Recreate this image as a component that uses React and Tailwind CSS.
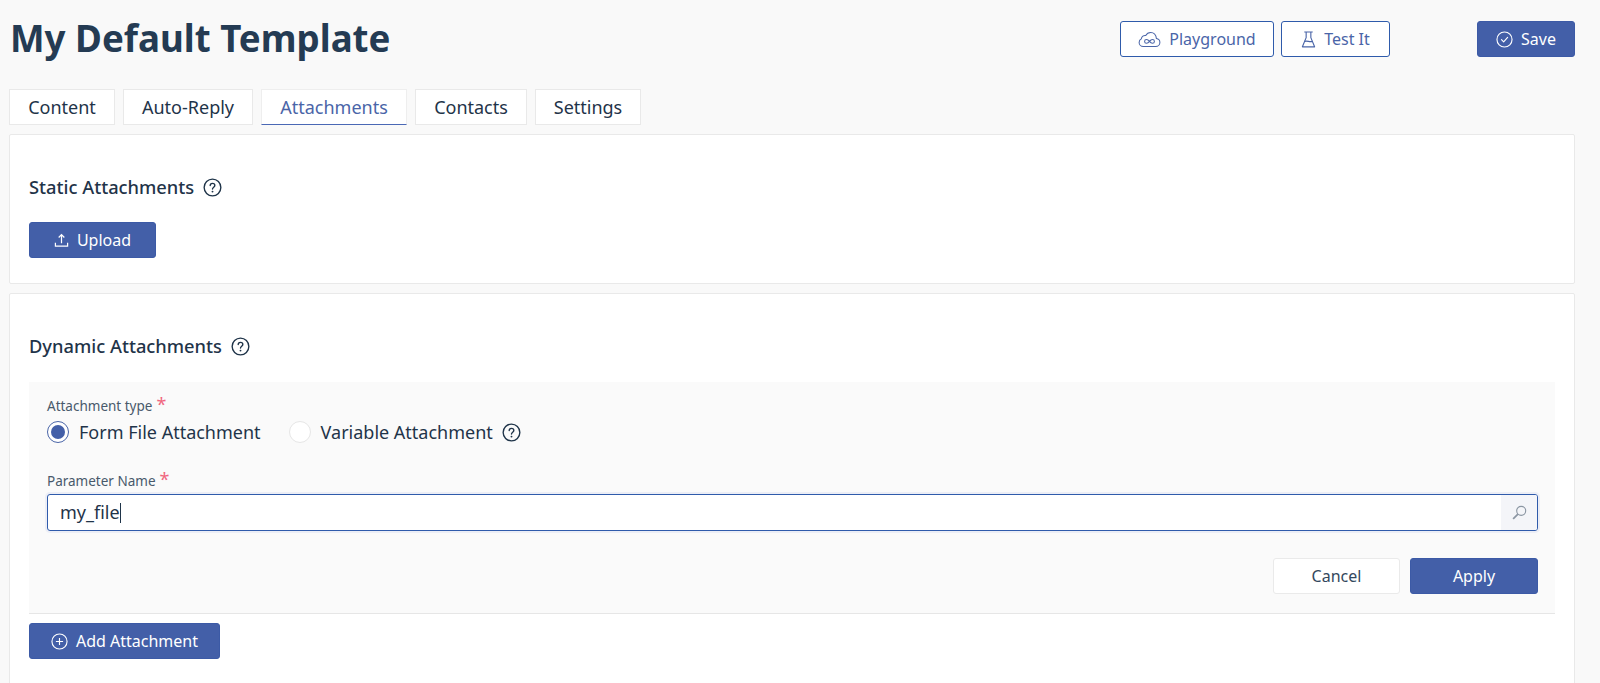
import React from 'react';

const HelpIcon = ({ className }) => (
  <svg viewBox="0 0 18 18" className={className} fill="none" stroke="currentColor">
    <circle cx="9" cy="9" r="7.9" strokeWidth="1.3" />
    <path d="M6.800 7.200c0-1.300 1-2.100 2.200-2.100s2.200.8 2.200 2c0 1.700-2.200 1.700-2.200 3.400" strokeWidth="1.300" strokeLinecap="round" />
    <circle cx="9" cy="12.900" r=".9" fill="currentColor" stroke="none" />
  </svg>
);

const CloudIcon = () => (
  <svg viewBox="0 0 24 18" className="w-[23px] h-[17px]" fill="none" stroke="currentColor" strokeWidth="1.1">
    <path d="M5.500 16.500h13c2.500 0 4.500-1.900 4.500-4.300 0-2.200-1.600-3.900-3.700-4.200C19 4.400 16.600 1.500 13.300 1.500c-2.400 0-4.300 1.300-5.300 3.300-2.300-.4-4.300 1.100-4.600 3.300C1.800 8.800 1 10.400 1 12.200c0 2.400 2 4.300 4.500 4.300z" />
    <path d="M12 11c-1-1.300-2-2-3.100-2-1.200 0-2.100.9-2.100 2s.9 2 2.100 2c1.100 0 2.100-.7 3.100-2zm0 0c1-1.300 2-2 3.100-2 1.200 0 2.100.9 2.100 2s-.9 2-2.100 2c-1.100 0-2.100-.7-3.100-2z" />
  </svg>
);

const FlaskIcon = () => (
  <svg viewBox="0 0 16 18" className="w-[15px] h-[17px]" fill="none" stroke="currentColor" strokeWidth="1.2" strokeLinejoin="round">
    <path d="M3.500 1h9M5.500 1v6L1.500 16.800h13L10.500 7V1" />
    <path d="M3.800 11c2.800-1 5.500 1 8.400 0" />
  </svg>
);

const CheckCircleIcon = () => (
  <svg viewBox="0 0 18 18" className="w-[17px] h-[17px]" fill="none" stroke="currentColor" strokeWidth="1.2">
    <circle cx="9" cy="9" r="8" />
    <path d="M5.800 9.200l2.300 2.300 4.200-4.700" strokeLinecap="round" strokeLinejoin="round" />
  </svg>
);

const UploadIcon = () => (
  <svg viewBox="0 0 16 16" className="w-[15px] h-[15px]" fill="none" stroke="currentColor" strokeWidth="1.3">
    <path d="M1.500 10.500v3.500h13v-3.500M8 11V2M5 4.800L8 1.800l3 3" />
  </svg>
);

const PlusCircleIcon = () => (
  <svg viewBox="0 0 18 18" className="w-[17px] h-[17px]" fill="none" stroke="currentColor" strokeWidth="1.2">
    <circle cx="9" cy="9" r="8" />
    <path d="M9 5.200v7.600M5.200 9h7.600" />
  </svg>
);

const SearchIcon = () => (
  <svg viewBox="0 0 16 16" className="w-[15px] h-[15px]" fill="none" stroke="#8b96a3" strokeWidth="1.2">
    <circle cx="9.800" cy="6.200" r="4.800" />
    <path d="M6.300 9.700L1.200 14.800" strokeWidth="1.800" />
  </svg>
);

const tabs = [
  { label: 'Content', width: 'w-[106px]' },
  { label: 'Auto-Reply', width: 'w-[130px]' },
  { label: 'Attachments', width: 'w-[146px]', active: true },
  { label: 'Contacts', width: 'w-[112px]' },
  { label: 'Settings', width: 'w-[106px]' },
];

const OutlineButton = ({ width, children }) => (
  <button className={`${width} h-9 flex items-center justify-center gap-2 bg-white rounded-[3px] border border-[#2f5bab] text-[#4a65a8] text-[16px]`}>
    {children}
  </button>
);

const PrimaryButton = ({ width, children }) => (
  <button className={`${width} h-9 flex items-center justify-center gap-2 rounded-[3px] border border-[#3c5aa6] bg-[#435fa8] text-white text-[16px]`}>
    {children}
  </button>
);

export default function App() {
  return (
    <div className="h-[683px] overflow-hidden bg-[#f9f9f9] pl-[9px] pr-[25px] text-[#1f3449] font-['Noto_Sans','Open_Sans',sans-serif]">
      <div className="h-[89px] flex pt-[21px]">
        <h1 className="h-9 flex items-center pl-px text-[36.700px] font-bold text-[#243b53] grow">My Default Template</h1>
        <div className="flex gap-[7px]">
          <OutlineButton width="w-[154px]"><CloudIcon />Playground</OutlineButton>
          <OutlineButton width="w-[109px]"><FlaskIcon />Test It</OutlineButton>
        </div>
        <div className="ml-[87px]">
          <PrimaryButton width="w-[98px]"><CheckCircleIcon />Save</PrimaryButton>
        </div>
      </div>

      <div className="flex gap-2 h-9">
        {tabs.map((tab) => (
          <div
            key={tab.label}
            className={`${tab.width} flex items-center justify-center bg-white border text-[18px] ${tab.active ? 'border-[#eeeeee] border-b-[#4a68b5] text-[#4a65a8]' : 'border-[#e9e9e9] text-[#1f3449]'}`}
          >
            {tab.label}
          </div>
        ))}
      </div>

      <section className="mt-[9px] h-[150px] bg-white border border-[#e9e9e9] rounded-[2px] px-[19px] pt-[42px]">
        <h2 className="h-5 flex items-center gap-[9px] text-[18.300px] font-medium">
          Static Attachments <HelpIcon className="w-[19px] h-[19px]" />
        </h2>
        <div className="mt-[25px]">
          <PrimaryButton width="w-[127px]"><UploadIcon />Upload</PrimaryButton>
        </div>
      </section>

      <section className="mt-[9px] h-[400px] bg-white border border-[#e9e9e9] rounded-[2px] px-[19px] pt-[42px]">
        <h2 className="h-5 flex items-center gap-[9px] text-[18.300px] font-medium">
          Dynamic Attachments <HelpIcon className="w-[19px] h-[19px]" />
        </h2>

        <div className="mt-[26px] h-[232px] bg-[#fafafa] border-b border-[#e6e6e6] pl-[18px] pr-[17px] pt-[14px]">
          <div className="h-5 flex text-[13.500px] text-[#48596b] items-center">
            Attachment type <span className="ml-1 text-[#f0667f] text-[18px] -mt-1">*</span>
          </div>
          <div className="mt-[3px] flex items-center h-[26px] text-[18px]">
            <span className="w-[22px] h-[22px] rounded-full border border-[#4a65a8] bg-white flex items-center justify-center">
              <span className="w-[14px] h-[14px] rounded-full bg-[#435fa8]" />
            </span>
            <span className="ml-[10px]">Form File Attachment</span>
            <span className="ml-[28px] w-[22px] h-[22px] rounded-full border border-[#e6e6e6] bg-white" />
            <span className="ml-[10px]">Variable Attachment</span>
            <HelpIcon className="ml-[9px] w-[19px] h-[19px]" />
          </div>

          <div className="mt-[26px] h-5 flex text-[13.500px] text-[#48596b] items-center">
            Parameter Name <span className="ml-1 text-[#f0667f] text-[18px] -mt-1">*</span>
          </div>
          <div className="mt-[3px] h-[37px] flex bg-white border border-[#2f5bab] rounded-[3px] ring-2 ring-[#eceef6] overflow-hidden">
            <div className="grow flex items-center pl-3 text-[18px]">
              my_file<span className="w-px h-5 bg-[#1f3449]" />
            </div>
            <div className="w-9 flex items-center justify-center bg-[#f4f5f9]">
              <SearchIcon />
            </div>
          </div>

          <div className="mt-[27px] flex justify-end gap-[10px]">
            <button className="w-[127px] h-9 bg-white border border-[#eaeaea] rounded-[3px] text-[16px] text-[#33485d]">Cancel</button>
            <PrimaryButton width="w-[128px]">Apply</PrimaryButton>
          </div>
        </div>

        <div className="mt-[9px]">
          <PrimaryButton width="w-[191px]"><PlusCircleIcon />Add Attachment</PrimaryButton>
        </div>
      </section>
    </div>
  );
}
